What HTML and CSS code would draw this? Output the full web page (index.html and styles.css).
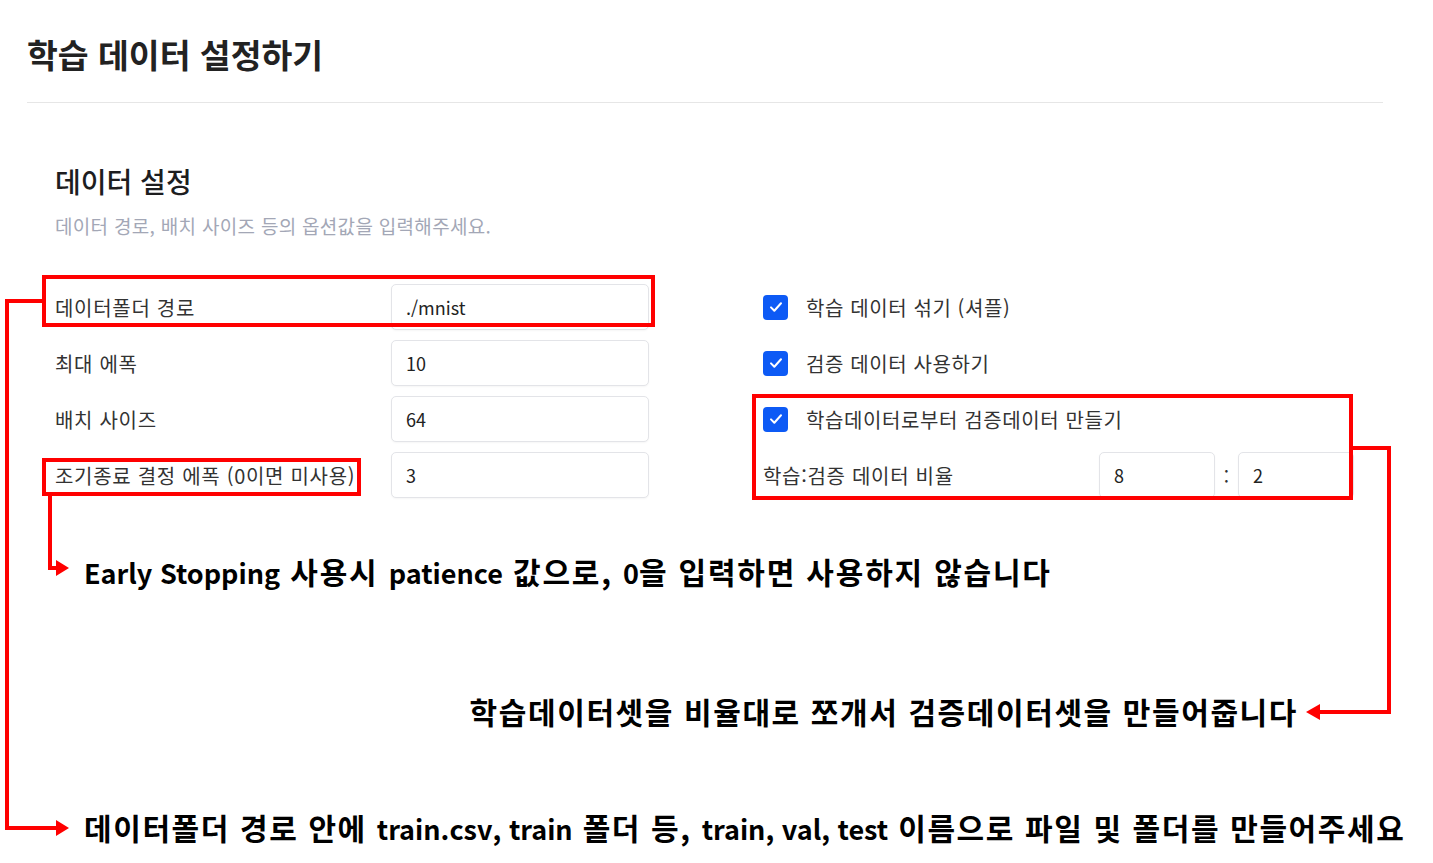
FILE: index.html
```html
<!DOCTYPE html>
<html lang="ko">
<head>
  <meta charset="UTF-8">
  <meta name="viewport" content="width=device-width, initial-scale=1.0">
  <title>학습 데이터 설정하기</title>
  <link rel="stylesheet" href="styles.css">
</head>
<body>
  <div class="page">
    <header class="page-header">
      <h1>학습 데이터 설정하기</h1>
    </header>

    <section class="settings">
      <h2 class="settings-title">데이터 설정</h2>
      <p class="settings-desc">데이터 경로, 배치 사이즈 등의 옵션값을 입력해주세요.</p>

      <div class="settings-body">
        <div class="field-list">
          <div class="field">
            <label>데이터폴더 경로</label>
            <input type="text" value="./mnist">
          </div>
          <div class="field">
            <label>최대 에폭</label>
            <input type="text" value="10">
          </div>
          <div class="field">
            <label>배치 사이즈</label>
            <input type="text" value="64">
          </div>
          <div class="field">
            <label>조기종료 결정 에폭 (0이면 미사용)</label>
            <input type="text" value="3">
          </div>
        </div>

        <div class="field-list">
          <label class="check">
            <span class="check-box"><svg viewBox="0 0 24 24"><path d="M6 12.5l4 4 8-9"/></svg></span>
            학습 데이터 섞기 (셔플)
          </label>
          <label class="check">
            <span class="check-box"><svg viewBox="0 0 24 24"><path d="M6 12.5l4 4 8-9"/></svg></span>
            검증 데이터 사용하기
          </label>
          <label class="check">
            <span class="check-box"><svg viewBox="0 0 24 24"><path d="M6 12.5l4 4 8-9"/></svg></span>
            학습데이터로부터 검증데이터 만들기
          </label>
          <div class="field">
            <label>학습:검증 데이터 비율</label>
            <div class="ratio">
              <input type="text" value="8">
              <span class="ratio-sep">:</span>
              <input type="text" value="2">
            </div>
          </div>
        </div>
      </div>
    </section>

    <div class="notes">
      <p class="note note-early"><span class="en">Early Stopping</span> 사용시 <span class="en">patience</span> 값으로, <span class="en">0</span>을 입력하면 사용하지 않습니다</p>
      <p class="note note-split">학습데이터셋을 비율대로 쪼개서 검증데이터셋을 만들어줍니다</p>
      <p class="note note-folder">데이터폴더 경로 안에 <span class="en">train.csv, train</span> 폴더 등, <span class="en">train, val, test</span> 이름으로 파일 및 폴더를 만들어주세요</p>
    </div>
  </div>

  <!-- red callouts drawn over the screenshot -->
  <svg class="callouts" width="1433" height="863" viewBox="0 0 1433 863">
    <g fill="none" stroke="#ff0000" stroke-width="4">
      <rect x="44" y="277" width="609" height="48"/>
      <rect x="44" y="460" width="315" height="34"/>
      <rect x="754" y="396" width="597" height="102"/>
      <path d="M42 301H7V828H58"/>
      <path d="M50 496V568H58"/>
      <path d="M1353 448H1389V712H1318"/>
    </g>
    <g fill="#ff0000">
      <path d="M56 820L69 828L56 836Z"/>
      <path d="M56 560L69 568L56 576Z"/>
      <path d="M1320 704L1306 712L1320 720Z"/>
    </g>
  </svg>
</body>
</html>
```

FILE: styles.css
```css
* {
  margin: 0;
  padding: 0;
  box-sizing: border-box;
  font-family: "Noto Sans CJK KR", "Noto Sans", sans-serif;
}

body {
  background: white;
  color: #222;
  position: relative;
  overflow: hidden;
}

.page {
  width: 1433px;
  height: 863px;
  padding-left: 27px;
}

.page-header {
  width: 1356px;
  padding-top: 30px;
  padding-bottom: 24px;
  border-bottom: 1px solid #e6e6e6;
}

h1 {
  font-size: 33.5px;
  line-height: 48px;
  font-weight: 700;
  color: #222;
}

.settings {
  padding-left: 28px;
}

.settings-title {
  margin-top: 60px;
  font-size: 28px;
  line-height: 36px;
  font-weight: 500;
  color: #1d1d1f;
}

.settings-desc {
  margin-top: 14px;
  font-size: 19px;
  line-height: 26px;
  letter-spacing: 0.3px;
  color: #a3a7b6;
}

.settings-body {
  display: flex;
  gap: 114px;
  margin-top: 45px;
}

.field-list {
  display: flex;
  flex-direction: column;
  gap: 10px;
}

.field {
  display: grid;
  grid-template-columns: 336px auto;
  align-items: center;
  height: 46px;
}

.field label {
  font-size: 20px;
  letter-spacing: 0.7px;
  color: #333;
}

input {
  width: 258px;
  height: 46px;
  border: 1px solid #e3e4e8;
  border-radius: 5px;
  padding: 0 14px;
  font-size: 18px;
  color: #222;
  background: white;
  box-shadow: 0 1px 2px rgba(0, 0, 0, 0.04);
}

.check {
  display: flex;
  align-items: center;
  gap: 18px;
  height: 46px;
  font-size: 20px;
  letter-spacing: 0.6px;
  color: #333;
}

.check-box {
  width: 25px;
  height: 25px;
  border-radius: 4px;
  background: #0d5af5;
  display: flex;
  align-items: center;
  justify-content: center;
}

.check-box svg {
  width: 20px;
  height: 20px;
  fill: none;
  stroke: white;
  stroke-width: 2.4;
  stroke-linecap: round;
  stroke-linejoin: round;
}

.ratio {
  display: flex;
  align-items: center;
}

.ratio input {
  width: 116px;
}

.ratio-sep {
  width: 23px;
  text-align: center;
  font-size: 19px;
  color: #333;
}

.notes {
  padding-left: 57px;
}

.note {
  font-size: 30px;
  line-height: 40px;
  font-weight: 700;
  letter-spacing: 1.6px;
  color: #000;
  white-space: nowrap;
}

.note .en {
  font-size: 27px;
  letter-spacing: 0;
}

.note-early {
  margin-top: 53px;
  letter-spacing: 1.8px;
}

.note-split {
  margin-top: 98px;
  text-align: right;
  padding-right: 135px;
  margin-left: -57px;
  width: 1406px;
}

.note-folder {
  margin-top: 76px;
}

.callouts {
  position: absolute;
  top: 0;
  left: 0;
  pointer-events: none;
}
```
